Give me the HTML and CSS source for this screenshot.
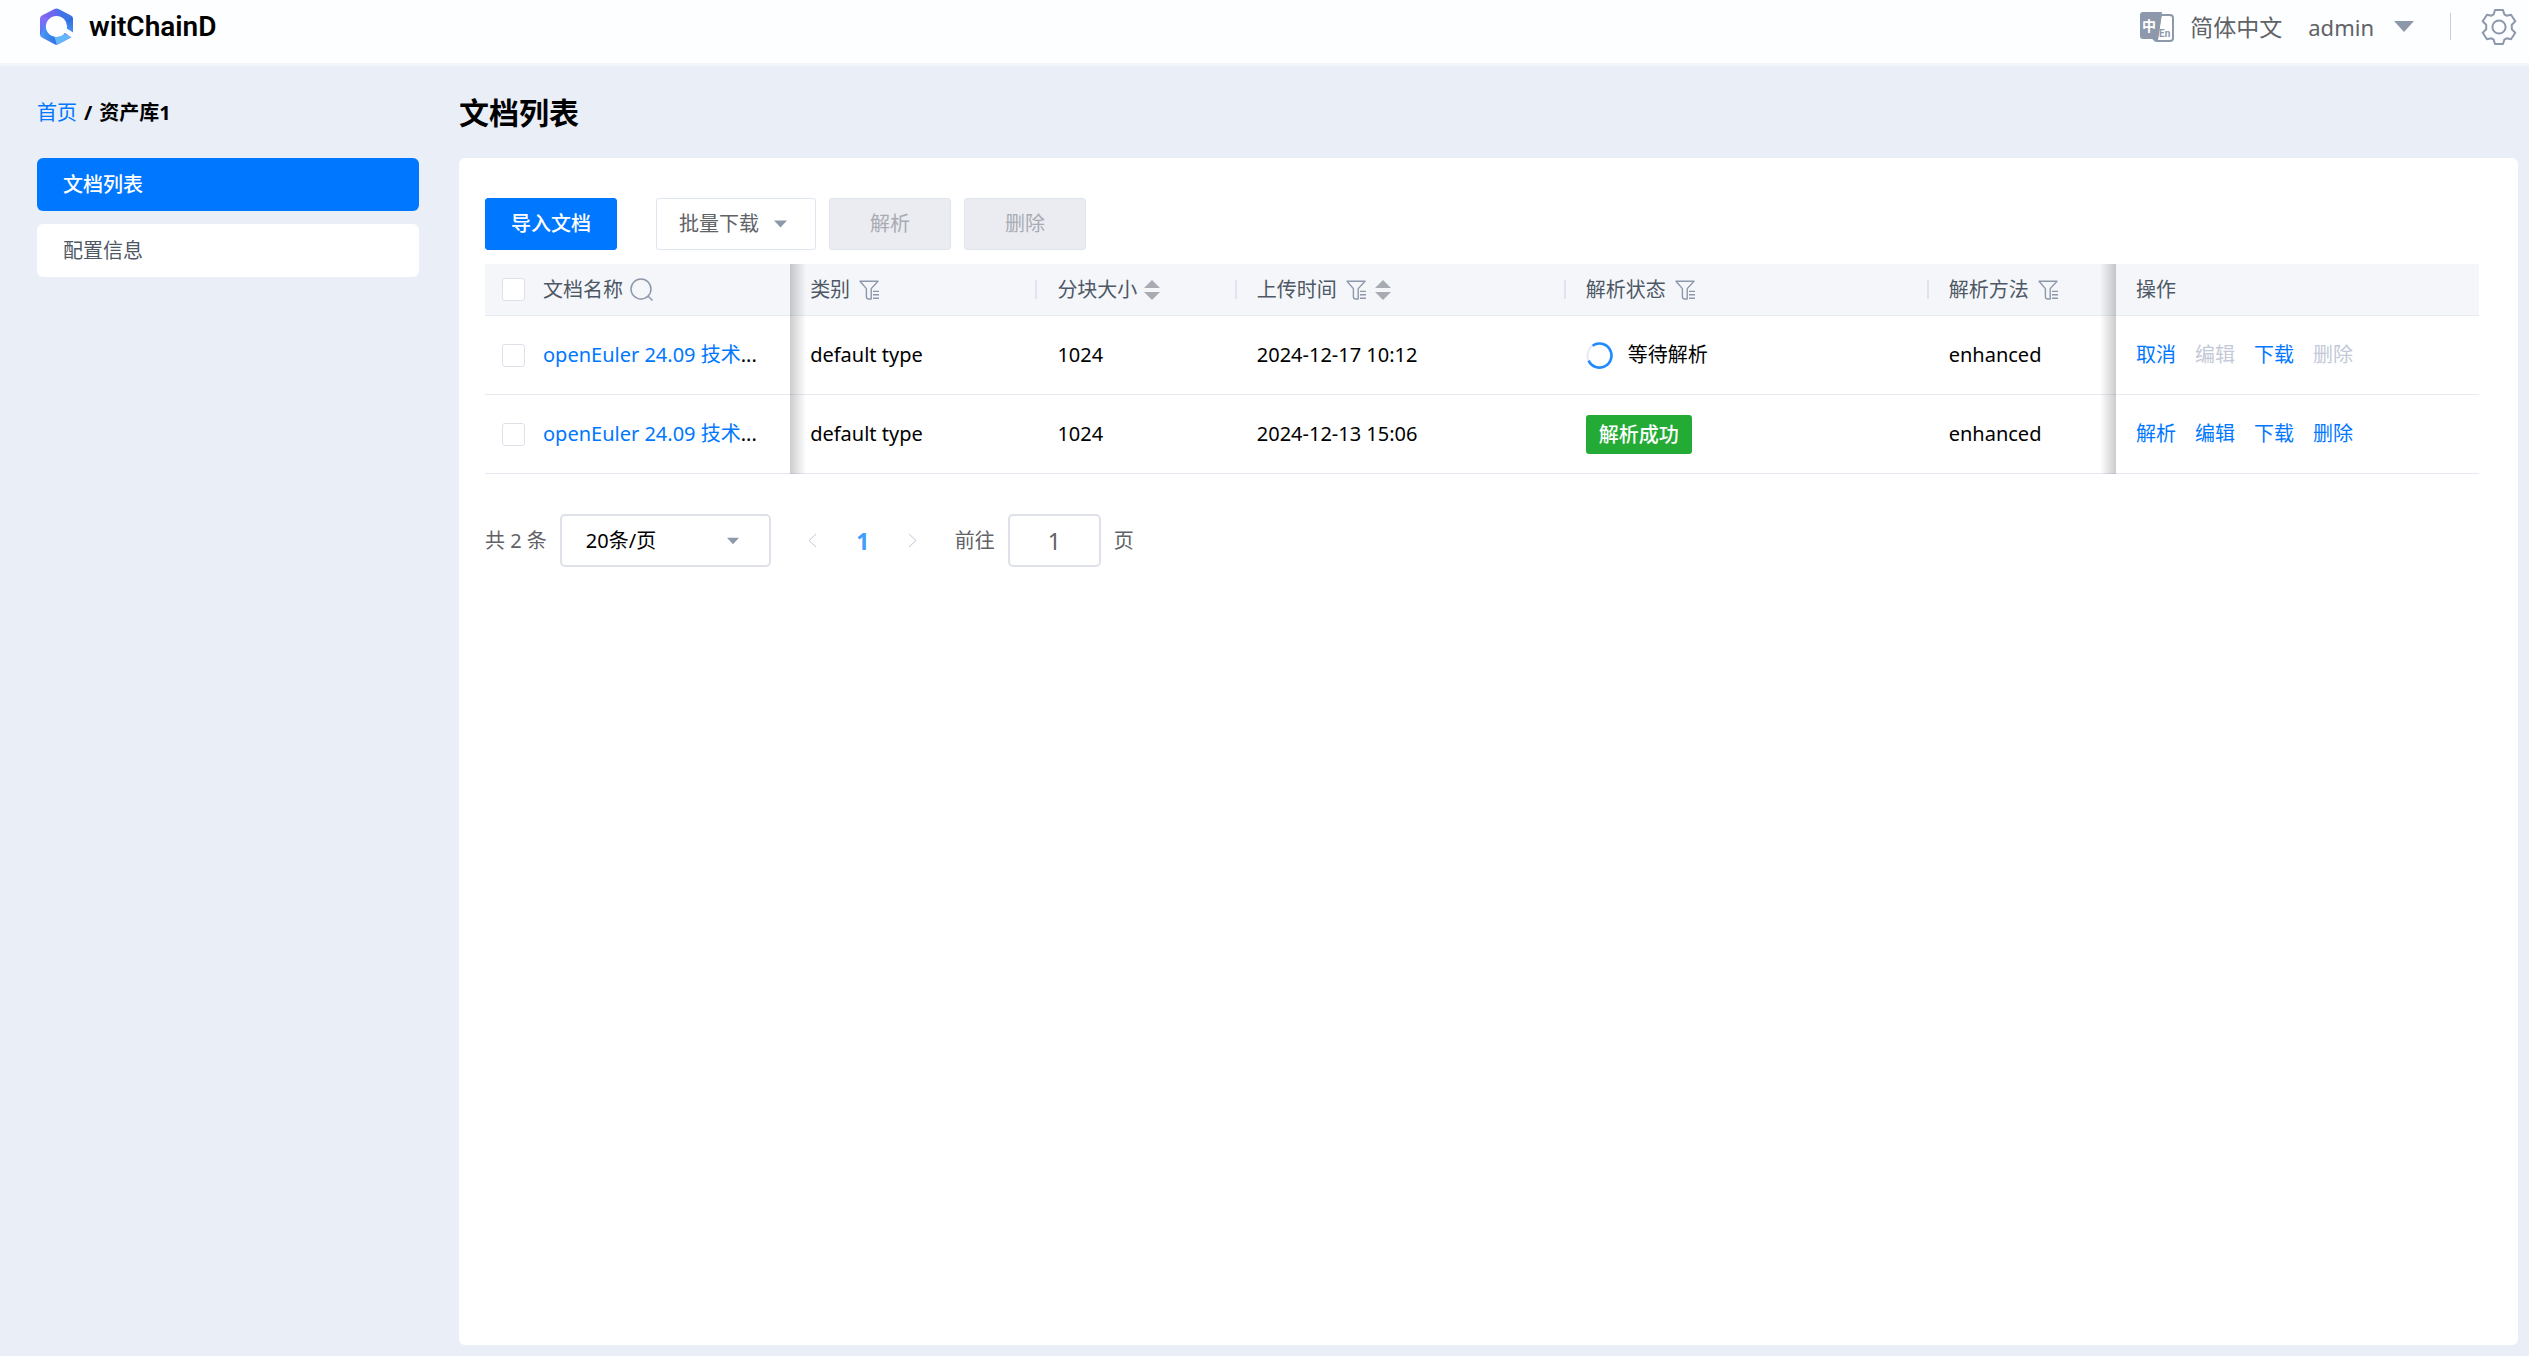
FILE: index.html
```
<!DOCTYPE html>
<html lang="zh-CN">
<head>
    <meta charset="UTF-8">
    <meta name="viewport" content="width=device-width, initial-scale=1.0">
    <title>witChainD</title>
    <link rel="stylesheet" href="styles.css">
</head>
<body>
    <svg class="sprite" aria-hidden="true">
        <symbol id="filter" viewBox="0 0 20 20">
            <path d="M1 1.2H19L12.2 8.6V19H10Q7.4 19 7.4 16.4V8.6Z" fill="none" stroke="currentColor" stroke-width="1.4" stroke-linejoin="round"/>
            <path d="M14 11.4H20M14 14.8H20M14 18.2H20" stroke="currentColor" stroke-width="1.4"/>
        </symbol>
        <symbol id="sort" viewBox="0 0 16 20">
            <path d="M8 0L16 8H0ZM0 12H16L8 20Z" fill="currentColor"/>
        </symbol>
        <symbol id="caret" viewBox="0 0 20 11">
            <path d="M0 0H20L10 11Z" fill="currentColor"/>
        </symbol>
    </svg>

    <header class="header">
        <a class="logo" href="#">
            <svg width="33" height="37" viewBox="0 0 33 37" aria-hidden="true">
                <defs>
                    <linearGradient id="g1" x1="0" y1="0" x2="1" y2="0"><stop offset="0" stop-color="#8a63f6"/><stop offset="1" stop-color="#5468ea"/></linearGradient>
                    <linearGradient id="g2" x1="0" y1="0" x2="0" y2="1"><stop offset="0" stop-color="#8b6bfb"/><stop offset="1" stop-color="#4a7df2"/></linearGradient>
                    <linearGradient id="g3" x1="0" y1="0" x2="0" y2="1"><stop offset="0" stop-color="#2b63d6"/><stop offset="1" stop-color="#4c9bfa"/></linearGradient>
                    <linearGradient id="g4" x1="0" y1="0" x2="1" y2="0"><stop offset="0" stop-color="#4aa0f8"/><stop offset="1" stop-color="#2f6fe0"/></linearGradient>
                    <mask id="ring">
                        <path d="M14.5 1Q16.5 0 18.5 1L31 7.5Q33 8.5 33 10.5V26.5Q33 28 31 29.5L18.5 36.3Q16.5 37.3 14.5 36.3L2 29.5Q0 28.5 0 26.5V10.5Q0 8.5 2 7.5Z" fill="#fff"/>
                        <circle cx="16.5" cy="18.5" r="10.6" fill="#000"/>
                        <path d="M22 23L26 20L34 25V29L31 29Z" fill="#000"/>
                    </mask>
                </defs>
                <g mask="url(#ring)">
                    <path d="M0 0H33V37H0Z" fill="#5b6cf0"/>
                    <path d="M0 9L17 0L24 9L10 13Z" fill="url(#g1)"/>
                    <path d="M16.5 0L33 8.5L27 15L20 8Z" fill="#3d74e6"/>
                    <path d="M33 8L26 14V22L33 27Z" fill="url(#g3)"/>
                    <path d="M0 8L8 10L6 24L0 28Z" fill="url(#g2)"/>
                    <path d="M0 28L6 17L16 30L17 37Z" fill="url(#g4)"/>
                    <path d="M14 28L24 26L33 28L17 37Z" fill="#62b8fb"/>
                </g>
            </svg>
            <span>witChainD</span>
        </a>
        <div class="header-right">
            <button class="lang" type="button">
                <svg width="34" height="30" viewBox="0 0 34 30" aria-hidden="true">
                    <rect x="14" y="3" width="19" height="26" rx="3" fill="#fff" stroke="#8d98aa" stroke-width="2"/>
                    <path d="M3 0H22L18 26L14 28L12 27H3Q0 27 0 24V3Q0 0 3 0Z" fill="#8d98aa"/>
                    <path d="M22 2L18 28H15L13 26Z" fill="#8d98aa"/>
                    <text x="2" y="19" class="icon-zh">中</text>
                    <text x="19" y="25" class="icon-en">En</text>
                </svg>
                简体中文
            </button>
            <button class="user" type="button">
                admin
                <svg width="20" height="11"><use href="#caret"/></svg>
            </button>
            <span class="line"></span>
            <button class="gear" type="button" aria-label="设置">
                <svg width="36" height="36" viewBox="0 0 36 36">
                    <path d="M14 1H22L23.3 5.3L25.6 6.7L30 5.7L34.3 12.3L30.8 15.7V20.3L34.3 23.7L30 30.3L25.6 29.3L23.3 30.7L22 35H14L12.7 30.7L10.4 29.3L6 30.3L1.7 23.7L5.2 20.3V15.7L1.7 12.3L6 5.7L10.4 6.7L12.7 5.3Z" fill="none" stroke="currentColor" stroke-width="2" stroke-linejoin="round"/>
                    <circle cx="18" cy="18" r="6.6" fill="none" stroke="currentColor" stroke-width="2"/>
                </svg>
            </button>
        </div>
    </header>

    <div class="layout">
        <aside class="sidebar">
            <div class="breadcrumb"><a href="#">首页</a><b>/</b><b>资产库1</b></div>
            <nav class="menu">
                <a class="active" href="#">文档列表</a>
                <a href="#">配置信息</a>
            </nav>
        </aside>

        <main class="main">
            <h1>文档列表</h1>
            <div class="card">
                <div class="toolbar">
                    <button class="btn primary" type="button">导入文档</button>
                    <button class="btn dropdown" type="button">批量下载 <svg width="13" height="8"><use href="#caret"/></svg></button>
                    <button class="btn" type="button" disabled>解析</button>
                    <button class="btn" type="button" disabled>删除</button>
                </div>

                <table>
                    <colgroup>
                        <col class="w-check"><col><col class="w-type"><col class="w-size"><col class="w-time"><col class="w-status"><col class="w-method"><col class="w-ops">
                    </colgroup>
                    <thead>
                        <tr>
                            <th class="check"><input type="checkbox" aria-label="全选"></th>
                            <th class="name"><div class="th">文档名称
                                <svg width="23" height="23" viewBox="0 0 23 23"><circle cx="11" cy="11" r="10" fill="none" stroke="currentColor" stroke-width="1.5"/><path d="M18 18L22.5 22.5" stroke="currentColor" stroke-width="1.5"/></svg>
                            </div></th>
                            <th><div class="th split">类别 <svg class="filter" width="20" height="20"><use href="#filter"/></svg></div></th>
                            <th><div class="th split">分块大小 <svg class="sort" width="16" height="20"><use href="#sort"/></svg></div></th>
                            <th><div class="th split">上传时间 <svg class="filter" width="20" height="20"><use href="#filter"/></svg><svg class="sort" width="16" height="20"><use href="#sort"/></svg></div></th>
                            <th><div class="th split">解析状态 <svg class="filter" width="20" height="20"><use href="#filter"/></svg></div></th>
                            <th><div class="th">解析方法 <svg class="filter" width="20" height="20"><use href="#filter"/></svg></div></th>
                            <th class="ops">操作</th>
                        </tr>
                    </thead>
                    <tbody>
                        <tr>
                            <td class="check"><input type="checkbox" aria-label="选择文档"></td>
                            <td class="name"><a href="#">openEuler 24.09 技术</a>...</td>
                            <td>default type</td>
                            <td>1024</td>
                            <td>2024-12-17 10:12</td>
                            <td><div class="waiting">
                                <svg width="27" height="27" viewBox="0 0 27 27"><circle cx="13.5" cy="13.5" r="12" fill="none" stroke="#e6ebf5" stroke-width="2"/><path d="M6.6 3.7A12 12 0 1 1 2.6 18.6" fill="none" stroke="#1f8bff" stroke-width="2.6"/></svg>
                                等待解析
                            </div></td>
                            <td>enhanced</td>
                            <td class="ops"><div class="links">
                                <button type="button">取消</button>
                                <button type="button" disabled>编辑</button>
                                <button type="button">下载</button>
                                <button type="button" disabled>删除</button>
                            </div></td>
                        </tr>
                        <tr>
                            <td class="check"><input type="checkbox" aria-label="选择文档"></td>
                            <td class="name"><a href="#">openEuler 24.09 技术</a>...</td>
                            <td>default type</td>
                            <td>1024</td>
                            <td>2024-12-13 15:06</td>
                            <td><span class="tag">解析成功</span></td>
                            <td>enhanced</td>
                            <td class="ops"><div class="links">
                                <button type="button">解析</button>
                                <button type="button">编辑</button>
                                <button type="button">下载</button>
                                <button type="button">删除</button>
                            </div></td>
                        </tr>
                    </tbody>
                </table>

                <div class="pagination">
                    <span>共 2 条</span>
                    <div class="select">
                        <select aria-label="每页条数"><option>20条/页</option></select>
                        <svg width="12" height="8"><use href="#caret"/></svg>
                    </div>
                    <div class="pages">
                        <button type="button" aria-label="上一页" disabled><svg width="9" height="15" viewBox="0 0 9 15"><path d="M8 1L1 7.5L8 14" fill="none" stroke="currentColor"/></svg></button>
                        <button class="current" type="button">1</button>
                        <button type="button" aria-label="下一页" disabled><svg width="9" height="15" viewBox="0 0 9 15"><path d="M1 1L8 7.5L1 14" fill="none" stroke="currentColor"/></svg></button>
                    </div>
                    <label class="jump">前往 <input type="text" value="1"> 页</label>
                </div>
            </div>
        </main>
    </div>
</body>
</html>
```
FILE: styles.css
```
* {
    margin: 0;
    padding: 0;
    box-sizing: border-box;
}
body {
    font-family: "Noto Sans", "Noto Sans CJK SC", sans-serif;
    font-size: 20px;
    line-height: 28px;
    color: #000;
    background: #e9eef7;
    min-height: 100vh;
    display: flex;
    flex-direction: column;
}
a {
    color: #0077ff;
    text-decoration: none;
}
button, input, select {
    font: inherit;
    color: inherit;
}
button {
    background: none;
    border: none;
    cursor: pointer;
}
button:disabled {
    cursor: not-allowed;
}
svg {
    flex-shrink: 0;
}
.sprite {
    position: absolute;
    width: 0;
    height: 0;
}

/* header */
.header {
    display: flex;
    justify-content: space-between;
    align-items: center;
    height: 66px;
    padding: 0 12px 10px 40px;
    background: #fdfeff;
    border-bottom: 3px solid #f3f6fa;
}
.logo {
    display: flex;
    align-items: center;
    gap: 16px;
    color: #000;
    font-family: Roboto, sans-serif;
    font-size: 28px;
    font-weight: 600;
}
.header-right {
    display: flex;
    align-items: center;
    color: #5f6266;
    font-size: 23px;
}
.header-right svg {
    color: #8d98aa;
}
.lang {
    display: flex;
    align-items: center;
    gap: 16px;
    margin-right: 26px;
}
.icon-zh {
    fill: #fff;
    font-size: 14px;
    font-weight: bold;
}
.icon-en {
    fill: #8d98aa;
    font-family: Roboto, sans-serif;
    font-size: 10px;
    font-weight: bold;
}
.user {
    display: flex;
    align-items: center;
    gap: 20px;
    font-size: 22px;
}
.line {
    width: 1px;
    height: 27px;
    margin: 0 30px 0 36px;
    background: #c3cedf;
}
.gear {
    display: flex;
}

/* layout */
.layout {
    flex: 1;
    display: flex;
    gap: 40px;
    padding: 0 11px 11px 37px;
}
.sidebar {
    width: 382px;
    flex-shrink: 0;
}
.breadcrumb {
    display: flex;
    align-items: center;
    gap: 7px;
    height: 92px;
    padding-top: 2px;
}
.menu {
    display: flex;
    flex-direction: column;
    gap: 13px;
}
.menu a {
    padding: 13px 26px 12px;
    border-radius: 6px;
    background: #fff;
    color: #4e5865;
}
.menu .active {
    background: #0077ff;
    color: #fff;
    font-weight: 500;
}
.main {
    flex: 1;
    min-width: 0;
    display: flex;
    flex-direction: column;
}
h1 {
    height: 92px;
    padding-top: 2px;
    font-size: 30px;
    line-height: 90px;
}
.card {
    flex: 1;
    padding: 40px 39px 26px 26px;
    border-radius: 6px;
    background: #fff;
}

/* toolbar */
.toolbar {
    display: flex;
    gap: 13px;
    margin-bottom: 14px;
}
.btn {
    height: 52px;
    padding: 0 40px;
    border: 1px solid #dfe5ef;
    border-radius: 3px;
    background: #fff;
    color: #5f6266;
}
.btn:disabled {
    background: #ebecf2;
    color: #a8abb2;
}
.primary {
    padding: 0 25px;
    margin-right: 26px;
    border-color: #0077ff;
    background: #0077ff;
    color: #fff;
    font-weight: 500;
}
.dropdown {
    display: flex;
    align-items: center;
    gap: 15px;
    padding: 0 28px 0 22px;
}
.dropdown svg, .select svg {
    color: #8d98aa;
}

/* table */
table {
    width: 100%;
    table-layout: fixed;
    border-collapse: separate;
    border-spacing: 0;
}
.w-check { width: 58px; }
.w-type { width: 12.4%; }
.w-size { width: 10%; }
.w-time { width: 16.5%; }
.w-status { width: 18.2%; }
.w-method { width: 9.4%; }
.w-ops { width: 18.2%; }
th, td {
    padding: 0 0 0 20px;
    border-bottom: 1px solid #e6eaf2;
    text-align: left;
    white-space: nowrap;
}
th {
    height: 52px;
    background: #f4f6fa;
    color: #4e5865;
    font-weight: 400;
}
td {
    height: 79px;
}
.check {
    padding-left: 17px;
}
.name {
    position: relative;
    padding: 0;
}
.ops {
    position: relative;
}
/* shadows of the fixed columns */
.name::after, .ops::before {
    content: "";
    position: absolute;
    top: 0;
    bottom: -1px;
    width: 16px;
}
.name::after {
    left: 100%;
    background: linear-gradient(to right, rgba(0, 0, 0, 0.2), rgba(0, 0, 0, 0));
}
.ops::before {
    right: 100%;
    background: linear-gradient(to left, rgba(0, 0, 0, 0.2), rgba(0, 0, 0, 0));
}
.th {
    display: flex;
    align-items: center;
    gap: 7px;
}
.th svg {
    color: #8d98aa;
}
.th .filter {
    margin: 0 2px;
}
.th .sort {
    color: #a8abb2;
}
.split::after {
    content: "";
    width: 2px;
    height: 19px;
    margin-left: auto;
    background: #dfe5ef;
}
input[type="checkbox"] {
    display: block;
    appearance: none;
    width: 23px;
    height: 23px;
    border: 1px solid #dfe1ea;
    border-radius: 3px;
    background: #fff;
}
.waiting {
    display: flex;
    align-items: center;
    gap: 15px;
}
.tag {
    display: inline-block;
    padding: 0 13px;
    border-radius: 3px;
    background: #24ab36;
    color: #fff;
    font-weight: 500;
    line-height: 39px;
}
.links {
    display: flex;
    gap: 19px;
}
.links button {
    color: #0077ff;
}
.links button:disabled {
    color: #c3c9d8;
}

/* pagination */
.pagination {
    display: flex;
    align-items: center;
    margin-top: 40px;
    color: #5f6266;
}
.select {
    display: grid;
    align-items: center;
    width: 211px;
    margin-left: 13px;
}
.select select, .select svg {
    grid-area: 1 / 1;
}
.select select {
    appearance: none;
    height: 53px;
    padding: 0 24px;
    border: 2px solid #dfe1ea;
    border-radius: 5px;
    background: #fff;
    color: #000;
}
.select svg {
    justify-self: end;
    margin-right: 32px;
    pointer-events: none;
}
.pages {
    display: flex;
    margin: 0 17px;
}
.pages button {
    width: 50px;
    height: 50px;
    color: #c0c6d4;
}
.pages .current {
    color: #409eff;
    font-size: 23px;
    font-weight: bold;
}
.jump {
    display: flex;
    align-items: center;
    gap: 13px;
}
.jump input {
    width: 93px;
    height: 53px;
    border: 2px solid #dfe1ea;
    border-radius: 5px;
    background: #fff;
    font-size: 23px;
    text-align: center;
}
```
